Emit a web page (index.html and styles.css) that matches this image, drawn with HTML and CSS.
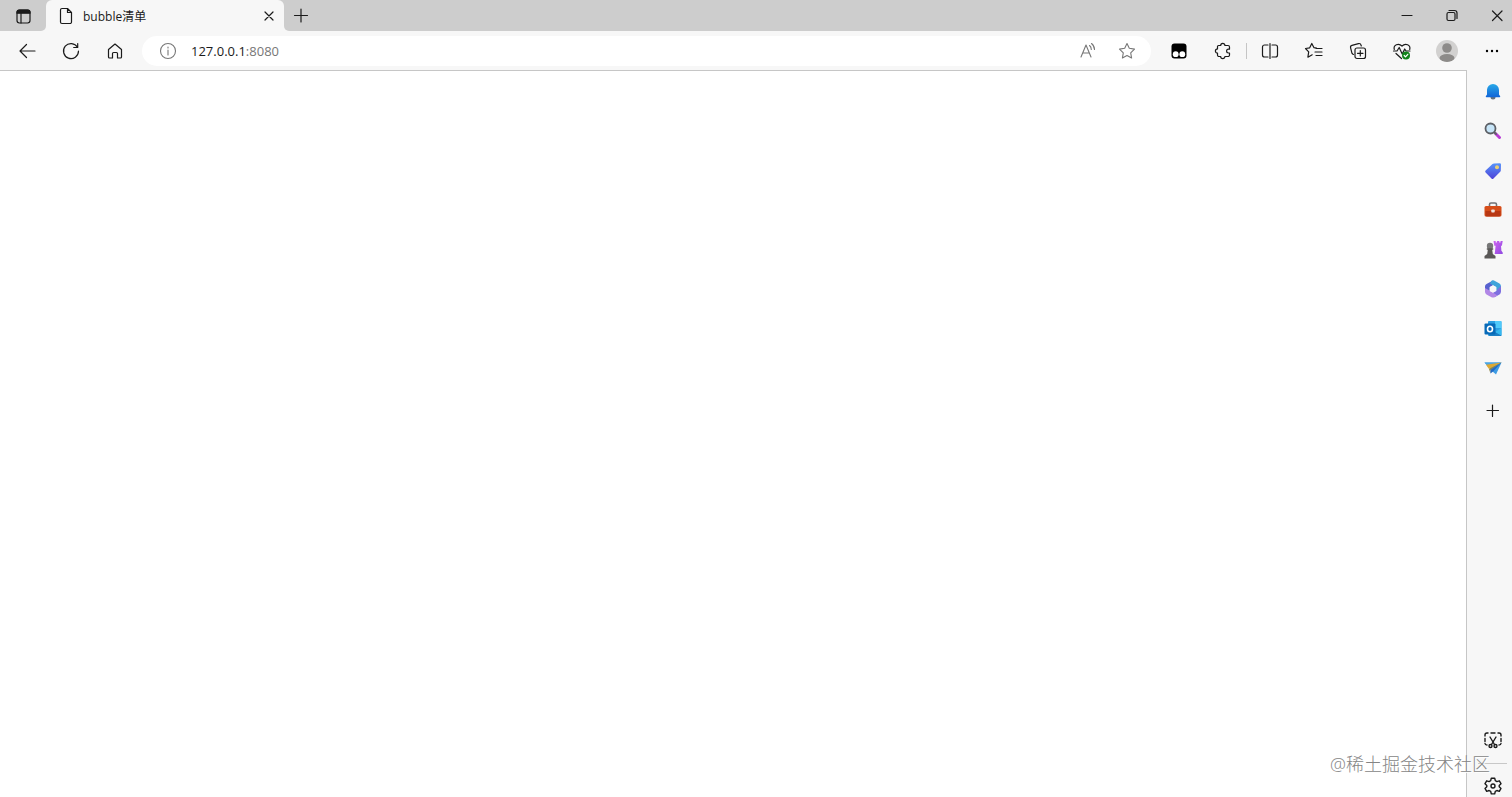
FILE: index.html
```html
<!DOCTYPE html>
<html lang="zh-CN">
<head>
    <meta charset="UTF-8">
    <meta name="viewport" content="width=device-width, initial-scale=1.0">
    <title>bubble清单</title>
    <link rel="stylesheet" href="styles.css">
</head>
<body>
    <div class="browser">
        <header class="tab-strip">
            <div class="strip-start">
                <button class="icon-btn" aria-label="Tab actions">
                    <svg class="icon" viewBox="0 0 20 20"><rect x="4" y="4" width="13" height="13" rx="2.4"/><path class="solid" d="M4 7.200V6.400A2.400 2.400 0 0 1 6.400 4h8.200A2.400 2.400 0 0 1 17 6.400v.8z"/><path d="M8 7.500V17"/></svg>
                </button>
            </div>
            <div class="tab">
                <svg class="icon" viewBox="0 0 20 20"><path d="M11.500 2.500H6A1.500 1.500 0 0 0 4.500 4v12A1.500 1.500 0 0 0 6 17.500h8a1.500 1.500 0 0 0 1.500-1.500V6.500zM11.500 2.500v4h4"/></svg>
                <span class="tab-title">bubble清单</span>
                <button class="tab-close" aria-label="Close tab">
                    <svg class="icon" viewBox="0 0 20 20"><path d="M6 6l8 8M14 6l-8 8"/></svg>
                </button>
            </div>
            <div class="strip-end">
                <button class="new-tab" aria-label="New tab">
                    <svg class="icon" viewBox="0 0 20 20"><path d="M3.500 9.500h13M10 3v13"/></svg>
                </button>
                <div class="window-controls">
                    <button aria-label="Minimize"><svg class="icon" viewBox="0 0 20 20"><path d="M4 9.500h10"/></svg></button>
                    <button aria-label="Restore"><svg class="icon" viewBox="0 0 20 20"><rect x="4" y="6.500" width="8" height="8" rx="1.500"/><path d="M6 4.500h5.500A2.500 2.500 0 0 1 14 7v5.500"/></svg></button>
                    <button aria-label="Close"><svg class="icon" viewBox="0 0 20 20"><path d="M4.500 5l9.500 9.500M14 5l-9.500 9.500"/></svg></button>
                </div>
            </div>
        </header>

        <nav class="toolbar">
            <button class="icon-btn" aria-label="Back"><svg class="icon" viewBox="0 0 20 20"><path d="M18 10H3M9.500 3.500L3 10l6.500 6.500"/></svg></button>
            <button class="icon-btn" aria-label="Refresh"><svg class="icon" viewBox="0 0 20 20"><path d="M16.500 6.300A7.500 7.500 0 1 0 17.500 10M16.700 2.500v4h-4"/></svg></button>
            <button class="icon-btn" aria-label="Home"><svg class="icon" viewBox="0 0 20 20"><path d="M3.500 8.500L10 3l6.500 5.500V16a1 1 0 0 1-1 1H12.500v-4.500a1 1 0 0 0-1-1h-3a1 1 0 0 0-1 1V17H4.500a1 1 0 0 1-1-1z"/></svg></button>

            <div class="address-bar">
                <svg class="icon muted" viewBox="0 0 20 20"><circle cx="10" cy="10" r="7.500"/><path d="M10 9v5M10 6v1"/></svg>
                <a class="url" href="http://127.0.0.1:8080">127.0.0.1<span class="port">:8080</span></a>
                <button class="icon-btn address-btn" aria-label="Read aloud"><svg class="icon muted" viewBox="0 0 20 20"><path d="M3 16L8 4l5 12M4.700 12h6.600M11.500 4.500c1.200.9 1.800 2.200 1.800 4M13.500 2.500c1.900 1.500 3 3.500 3 6"/></svg></button>
                <button class="icon-btn address-btn" aria-label="Add to favorites"><svg class="icon muted" viewBox="0 0 20 20"><path d="M10 2.600l2.300 4.700 5.200.8-3.800 3.700.9 5.200-4.600-2.500L5.400 17l.9-5.200-3.800-3.700 5.200-.8z"/></svg></button>
            </div>

            <button class="icon-btn" aria-label="Extension"><svg class="icon" viewBox="0 0 20 20"><rect class="fill-dark" x="2.500" y="2.500" width="15" height="15" rx="3"/><circle class="fill-white" cx="6.700" cy="13.200" r="2.900"/><circle class="fill-white" cx="13.300" cy="13.200" r="2.900"/></svg></button>
            <button class="icon-btn" aria-label="Extensions"><svg class="icon" viewBox="0 0 20 20"><path d="M5.500 4.500h2.200a2.100 2.100 0 0 1 4.200 0h3.100a1.500 1.500 0 0 1 1.500 1.500v2.200h-1a1.900 1.900 0 0 0 0 3.800h1V14a1.500 1.500 0 0 1-1.500 1.500h-3.100a2.100 2.100 0 0 1-4.200 0H6A1.500 1.500 0 0 1 4.500 14v-1.900a2.100 2.100 0 0 1 0-4.200V5.500a1 1 0 0 1 1-1z"/></svg></button>
            <span class="separator"></span>
            <button class="icon-btn" aria-label="Split screen"><svg class="icon" viewBox="0 0 20 20"><path d="M8 4H4.500a2 2 0 0 0-2 2v8a2 2 0 0 0 2 2H8M12 4h3.500a2 2 0 0 1 2 2v8a2 2 0 0 1-2 2H12M10 2.500v15"/></svg></button>
            <button class="icon-btn" aria-label="Favorites"><svg class="icon" viewBox="0 0 20 20"><path d="M12.500 7.100l-2.500-.4-2.200-4.200-2.100 4.300-4.200.7 3.200 3.400-.8 5.300 4.300-2.400M12 7.500h6M11 11h7M12 14.500h6"/></svg></button>
            <button class="icon-btn" aria-label="Collections"><svg class="icon" viewBox="0 0 20 20"><rect x="7" y="7" width="10.500" height="10.500" rx="2"/><path d="M5.500 13.500a2 2 0 0 1-1.500-1.200L2.600 6.800A2 2 0 0 1 4 4.400l6.500-1.800A2 2 0 0 1 13 4l.3 1M12.300 9.500v5.500M9.500 12.300H15"/></svg></button>
            <button class="icon-btn" aria-label="Browser essentials"><svg class="icon" viewBox="0 0 20 20"><path d="M2.300 8.500C1 4 6.500 1.500 10 5c3.500-3.500 9-1 7.700 3.500M4 12.500l5.500 5M1.500 10H5l2.200-3.500 3 6.500 2.500-5 1.300 2h4"/><circle class="fill-green" cx="14" cy="14.500" r="4"/><path class="stroke-white" d="M12.200 14.500l1.300 1.300 2.300-2.500"/></svg></button>
            <button class="icon-btn profile" aria-label="Profile"><svg class="avatar" viewBox="0 0 22 22"><defs><clipPath id="avatarClip"><circle cx="11" cy="11" r="11"/></clipPath></defs><g clip-path="url(#avatarClip)"><rect width="22" height="22" fill="#d2d1d0"/><circle cx="11" cy="8" r="4.800" fill="#8d8b89"/><ellipse cx="11" cy="18" rx="7.500" ry="4" fill="#8d8b89"/></g></svg></button>
            <button class="icon-btn more" aria-label="Settings and more"><svg class="icon" viewBox="0 0 20 20"><g class="fill-dark"><circle cx="5" cy="10" r="1.200"/><circle cx="10" cy="10" r="1.200"/><circle cx="15" cy="10" r="1.200"/></g></svg></button>
        </nav>

        <div class="workspace">
            <main class="page"></main>
            <aside class="sidebar">
                <div class="apps">
                    <button aria-label="Notifications"><svg class="icon" viewBox="0 0 20 20"><defs><linearGradient id="bell" x2="0" y2="1"><stop stop-color="#28a9e8"/><stop offset="1" stop-color="#1164d7"/></linearGradient></defs><path class="plain" fill="#66727c" d="M7.500 15h5a2.500 2.500 0 0 1-5 0z"/><path class="plain" fill="url(#bell)" d="M10 2a6 6 0 0 1 6 6v4.500l1.200 1.800q.3 1-.7 1h-13q-1 0-.7-1L4 12.500V8a6 6 0 0 1 6-6z"/></svg></button>
                    <button aria-label="Search"><svg class="icon" viewBox="0 0 20 20"><path stroke="#b93bd5" stroke-width="3" d="M12.500 12.500l4 4"/><path stroke="#62646a" stroke-width="2" d="M11 11l2 2"/><circle cx="7.500" cy="7.500" r="5" fill="#c7e5f8" stroke="#5d6066" stroke-width="1.800"/></svg></button>
                    <button aria-label="Shopping"><svg class="icon" viewBox="0 0 20 20"><defs><linearGradient id="tag" x2="0" y2="1"><stop stop-color="#5794fa"/><stop offset="1" stop-color="#4e43d8"/></linearGradient></defs><path class="plain" fill="url(#tag)" d="M11 2.500l5.800-.3q1.200 0 1.200 1.200l-.2 6q0 .8-.6 1.300l-6.700 6.700q-1 1-2 0L2.600 11.500q-1-1 0-2l6.900-6.400q.6-.6 1.500-.6z"/><circle cx="14" cy="6.300" r="2" fill="#e9cf75" stroke="none"/></svg></button>
                    <button aria-label="Tools"><svg class="icon" viewBox="0 0 20 20"><path stroke="#707276" stroke-width="1.600" d="M6.500 7V4.500q0-1.500 1.500-1.500h4q1.500 0 1.500 1.500V7"/><rect class="plain" x="1.500" y="6" width="17" height="10.500" rx="1.500" fill="#d64d19"/><path class="plain" fill="#b83713" d="M2.500 11h15v4q0 1.500-1.500 1.500H4q-1.500 0-1.500-1.500z"/><rect class="plain" x="8.300" y="9.500" width="3.400" height="3" rx=".7" fill="#eee1dc"/></svg></button>
                    <button aria-label="Games"><svg class="icon" viewBox="0 0 20 20"><defs><linearGradient id="rook" x2="1" y2="1"><stop stop-color="#cf63f1"/><stop offset="1" stop-color="#8f49e0"/></linearGradient></defs><path class="plain" fill="url(#rook)" d="M10.500 1h2.200v1.500h1.200V1h2.400v1.500h1.200V1h2.200l-.8 4.800h-.9l.4 5 1.300 1.700V14h-8l.9-8.200h-1.300z"/><circle cx="7" cy="6" r="3.200" fill="#777" stroke="none"/><path class="plain" fill="#5a5857" d="M3.800 8.200h6.400v1.600H9.200l.6 4.200 2.700 2v2.500h-11V16l2.700-2 .6-4.200h-1z"/></svg></button>
                    <button aria-label="Microsoft 365"><svg class="icon" viewBox="0 0 20 20"><path class="plain" fill="#5762cf" d="M10 1.500L3.500 5Q2 5.800 2 7.500v5.800L6.800 12V8.200L13 4.500z"/><path class="plain" fill="#3fa4da" d="M8.500 1.700q1.500-.9 3 0L16.500 4.600Q18 5.500 18 7.300v5l-4.800-.5V8.200L7 4.500z"/><path class="plain" fill="#7d6fe0" d="M18 7v5.500q0 2-1.500 2.900l-5 2.800-3.500-4.500 2-.1 3.200-1.800z"/><path class="plain" fill="#b287e6" d="M2 9v3.500q0 2 1.500 2.900l5 2.800q1.500.8 3 0l3-1.700L6.800 11.800z"/><path class="plain" fill="#f7f7f7" d="M10 6.200l3.300 1.900v3.800L10 13.800l-3.300-1.900V8.100z"/></svg></button>
                    <button aria-label="Outlook"><svg class="icon" viewBox="0 0 20 20"><rect class="plain" x="5" y="2" width="13.500" height="15" rx="1" fill="#2c9fe3"/><path class="plain" fill="#50cafa" d="M12 2h5.500q1 0 1 1v6H12z"/><path class="plain" fill="#1c7fc4" d="M6 9l12.500 7.500q-.5.500-1 .5H7q-1 0-1-1z"/><path class="plain" fill="#36b8ef" d="M18.500 9v7.500L12 13z"/><rect class="plain" x="1.500" y="4.500" width="11" height="11" rx="1" fill="#076ab8"/><ellipse cx="7" cy="10" rx="2.500" ry="2.800" stroke="#fff" stroke-width="1.600"/></svg></button>
                    <button aria-label="Drop"><svg class="icon" viewBox="0 0 20 20"><path class="plain" fill="#3e9ce4" d="M1.500 4.500h17L13 16.500 9 13z"/><path class="plain" fill="#4aa6e6" d="M1.500 4.500h17L5 8.500z"/><path class="plain" fill="#dfa832" d="M3 6.700L18.500 4.500 6 11z"/><path class="plain" fill="#8a8349" d="M6 11l12.500-6.500L7.500 12v3.500z"/><path class="plain" fill="#2269c5" d="M7.500 15.500V12l11-7.500-8.500 9z"/></svg></button>
                </div>
                <button class="customize" aria-label="Customize sidebar"><svg class="icon" viewBox="0 0 20 20"><path d="M4 9.500h11.500M9.500 4v11.500"/></svg></button>
                <div class="sidebar-bottom">
                    <button aria-label="Screenshot"><svg class="icon bold" viewBox="0 0 20 20"><path d="M2 6V5a2 2 0 0 1 2-2h1M8 3h4M15 3h1a2 2 0 0 1 2 2v1M2 8.500v3M18 8.500v3M2 13.500q.2 1.500 2 1.500M18 13.500q-.2 1.500-2 1.500M7 7l4.500 7.500M13 7l-4.500 7.500"/><circle cx="7.500" cy="16" r="1.500"/><circle cx="12.500" cy="16" r="1.500"/></svg></button>
                    <hr>
                    <button aria-label="Settings"><svg class="icon bold" viewBox="0 0 20 20"><path d="M8.300 2.200h3.400l.6 2.500 1.600.9 2.400-.8L18 7.700l-1.800 1.700v1.300l1.800 1.700-1.700 2.900-2.400-.8-1.600.9-.6 2.500H8.300l-.6-2.500-1.600-.9-2.400.8L2 12.400l1.800-1.700V9.400L2 7.700l1.700-2.900 2.400.8 1.600-.9z"/><circle cx="10" cy="10" r="2"/></svg></button>
                </div>
            </aside>
        </div>
        <div class="watermark">@稀土掘金技术社区</div>
    </div>
</body>
</html>
```
FILE: styles.css
```css
* {
    margin: 0;
    padding: 0;
    box-sizing: border-box;
}

body {
    font-family: "Open Sans", "Noto Sans CJK SC", sans-serif;
    font-size: 12px;
    color: #1b1b1b;
    background: #f7f7f7;
}

button {
    display: flex;
    align-items: center;
    justify-content: center;
    border: none;
    background: transparent;
    color: inherit;
    cursor: pointer;
}

.browser {
    position: relative;
    display: flex;
    flex-direction: column;
    height: 100vh;
    overflow: hidden;
}

/* icons */
.icon {
    flex: none;
    width: 20px;
    height: 20px;
    fill: none;
    stroke: currentColor;
    stroke-width: 1.2;
    stroke-linejoin: round;
    stroke-linecap: round;
}

.bold {
    stroke-width: 1.4;
}

.muted {
    color: #777;
    stroke-width: 1.1;
}

.plain {
    stroke: none;
}

.solid {
    fill: currentColor;
}

.fill-dark {
    fill: #000;
    stroke: none;
}

.fill-white {
    fill: #fff;
    stroke: none;
}

.fill-green {
    fill: #12831a;
    stroke: none;
}

.stroke-white {
    stroke: #fff;
}

.avatar {
    width: 22px;
    height: 22px;
}

/* tab strip */
.tab-strip {
    display: flex;
    height: 31px;
    /* grey behind the tab's top corners, light behind the bottom ones */
    background: linear-gradient(#cdcdcd 50%, #f7f7f7 50%);
}

.strip-start,
.strip-end {
    display: flex;
    background: #cdcdcd;
}

.strip-start {
    width: 46px;
    border-bottom-right-radius: 5px;
}

.strip-start .icon-btn {
    width: 46px;
    height: 31px;
}

.strip-end {
    flex: 1;
    justify-content: space-between;
    border-bottom-left-radius: 5px;
}

.tab {
    display: flex;
    align-items: center;
    width: 238px;
    padding: 0 5px 0 10px;
    gap: 7px;
    background: #f7f7f7;
    border-radius: 6px 6px 0 0;
}

.tab-title {
    flex: 1;
}

.tab-close {
    width: 20px;
}

.new-tab {
    width: 34px;
}

.window-controls {
    display: flex;
    margin-right: -8px;
}

.window-controls button {
    width: 45px;
}

/* toolbar */
.toolbar {
    display: flex;
    align-items: center;
    height: 39px;
    padding-left: 5px;
}

.icon-btn {
    flex: none;
    width: 44px;
    height: 30px;
}

.address-bar {
    display: flex;
    flex: 1;
    align-items: center;
    height: 30px;
    margin: 0 6px 0 5px;
    padding: 0 5px 0 16px;
    background: #fff;
    border-radius: 15px;
}

.url {
    flex: 1;
    margin-left: 13px;
    font-size: 13px;
    line-height: 16px;
    color: #1b1b1b;
    text-decoration: none;
}

.port {
    color: #777;
}

.address-btn {
    width: 39px;
}

.profile {
    width: 46px;
}

.more {
    margin-right: -2px;
}

.separator {
    width: 1px;
    height: 16px;
    margin: 0 1px;
    background: #c5c5c5;
}

/* page and sidebar */
.workspace {
    display: flex;
    flex: 1;
    min-height: 0;
}

.page {
    flex: 1;
    background: #fff;
    border: 1px solid #c6c6c6;
    border-width: 1px 1px 0 0;
}

.sidebar {
    display: flex;
    flex-direction: column;
    width: 45px;
    padding-top: 2px;
    padding-left: 6px;
}

.apps {
    display: grid;
    grid-auto-rows: 1fr;
    height: 316px;
}

.customize {
    height: 40px;
    margin-top: 3px;
}

.sidebar-bottom {
    display: flex;
    flex-direction: column;
    margin-top: auto;
}

.sidebar-bottom button {
    height: 46px;
}

.sidebar-bottom button:last-child {
    height: 44px;
    margin-bottom: -11px;
}

.sidebar-bottom hr {
    margin: 0 5px;
    border: none;
    border-top: 1px solid #c8c8c8;
}

.watermark {
    position: absolute;
    right: 22px;
    bottom: 20px;
    font-size: 18px;
    font-weight: 300;
    line-height: 26px;
    color: #858585;
    text-shadow: 1px 1px 0 #fff;
}
```
